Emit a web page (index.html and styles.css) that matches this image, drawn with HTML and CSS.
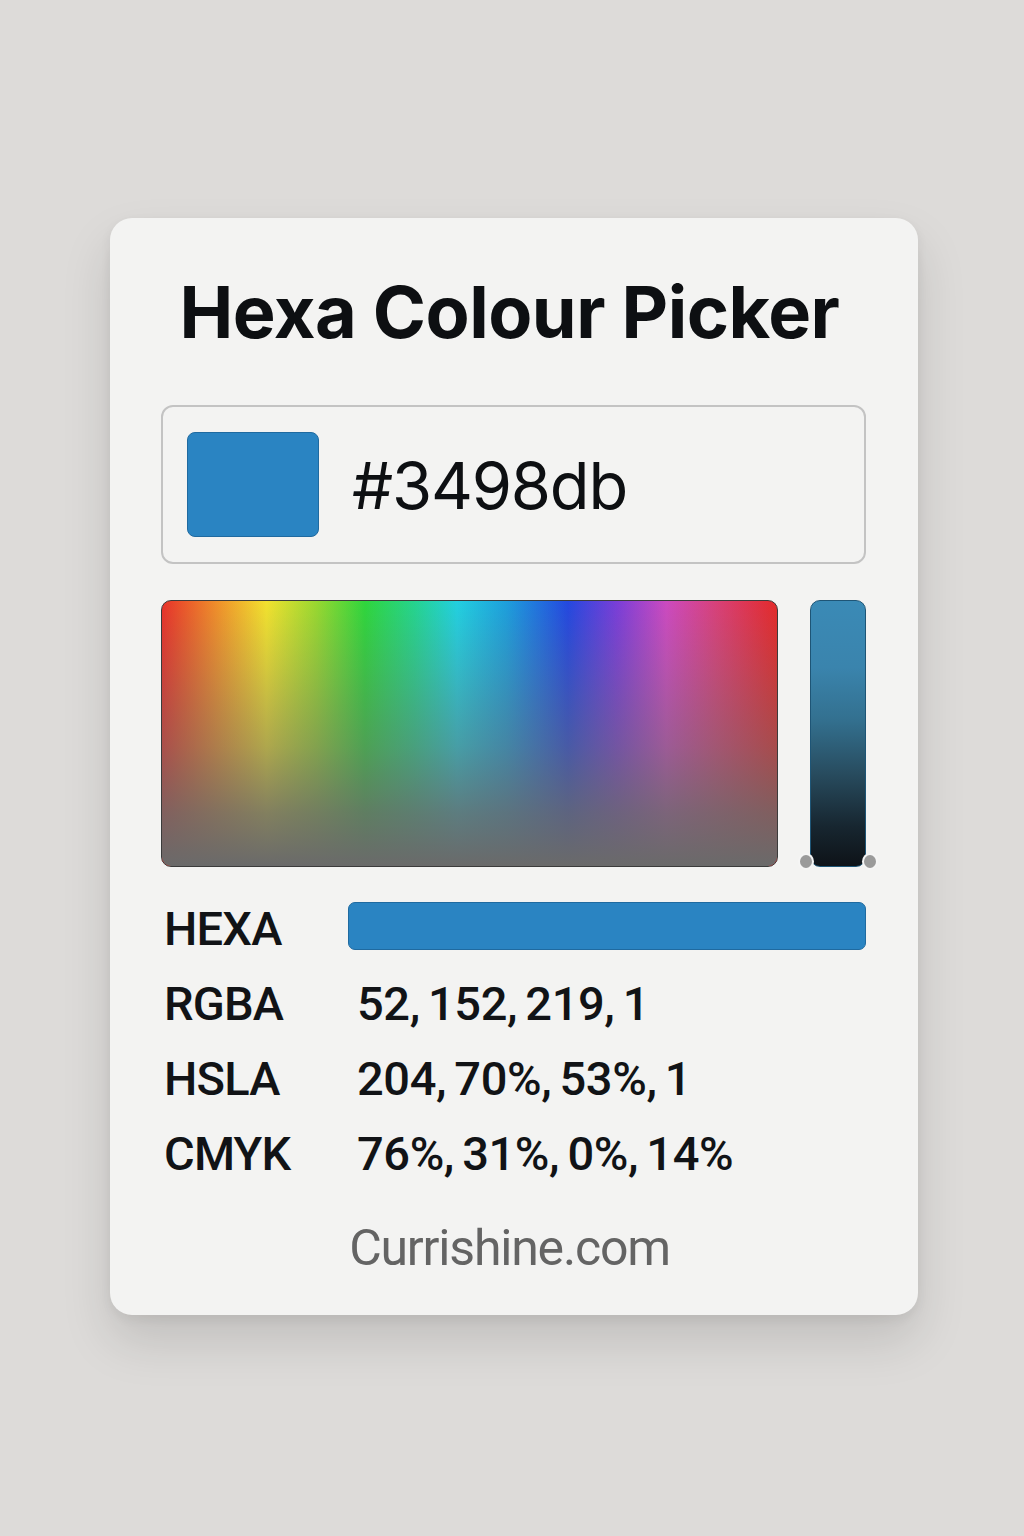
FILE: index.html
```html
<!DOCTYPE html>
<html lang="en">
<head>
<meta charset="utf-8">
<title>Hexa Colour Picker</title>
<link rel="stylesheet" href="styles.css">
</head>
<body>
<main class="card">
  <h1 class="title">Hexa Colour Picker</h1>
  <div class="hex-input">
    <span class="swatch"></span>
    <span class="hex-text">#3498db</span>
  </div>
  <div class="picker">
    <div class="spectrum"><div class="shade"></div></div>
    <div class="slider">
      <span class="knob knob-left"></span>
      <span class="knob knob-right"></span>
    </div>
  </div>
  <div class="values">
    <div class="label">HEXA</div>
    <div class="hexa-bar"></div>
    <div class="label">RGBA</div>
    <div class="value">52, 152, 219, 1</div>
    <div class="label">HSLA</div>
    <div class="value">204, 70%, 53%, 1</div>
    <div class="label">CMYK</div>
    <div class="value">76%, 31%, 0%, 14%</div>
  </div>
  <div class="footer">Currishine.com</div>
</main>
</body>
</html>
```
FILE: styles.css
```css
* { box-sizing: border-box; }
html, body { margin: 0; padding: 0; }
body {
  background: #dddbd9;
  font-family: Inter, "Liberation Sans", sans-serif;
  color: #0d0f12;
  min-height: 1536px;
}
.card {
  width: 808px;
  height: 1097px;
  margin: 218px auto 0 110px;
  background: #f3f3f2;
  border-radius: 22px;
  box-shadow: 0 26px 50px rgba(0,0,0,0.13), 0 4px 12px rgba(0,0,0,0.06);
  padding: 0 52px 0 51px;
  display: flex;
  flex-direction: column;
}
.title {
  margin: 44px 0 0;
  padding-right: 8px;
  text-align: center;
  font-size: 72px;
  font-weight: 700;
  letter-spacing: -0.5px;
  line-height: 100px;
}
.hex-input {
  margin-top: 43px;
  height: 159px;
  border: 2px solid #c3c3c3;
  border-radius: 12px;
  display: flex;
  align-items: center;
  padding-left: 24px;
  gap: 33px;
}
.swatch {
  width: 132px;
  height: 105px;
  background: #2a84c2;
  border: 1px solid #1f6aa0;
  border-radius: 8px;
}
.hex-text {
  font-size: 65px;
  font-weight: 400;
  letter-spacing: -1.2px;
  line-height: 1;
  padding-top: 2px;
}
.picker {
  margin-top: 36px;
  display: flex;
  gap: 32px;
  height: 267px;
}
.spectrum {
  position: relative;
  flex: 0 0 617px;
  border-radius: 10px;
  border: 1px solid #3b3b3b;
  overflow: hidden;
  background: linear-gradient(to right,
    #e8322a 0%, #f0902a 9%, #f2e22e 17%, #9ad830 25%, #2fd63c 33%,
    #25d48e 41%, #22d0e0 48%, #1d9fdc 56%, #2448e0 66%,
    #7a3ed8 74%, #cc4ac0 82%, #d8417a 90%, #e42a2a 100%);
}
.shade {
  position: absolute;
  inset: 0;
  background: linear-gradient(to bottom,
    rgba(110,110,110,0) 0%,
    rgba(110,110,110,0.22) 25%,
    rgba(108,108,108,0.5) 55%,
    rgba(106,106,106,0.82) 80%,
    rgba(106,106,106,1) 100%);
}
.slider {
  position: relative;
  flex: 0 0 56px;
  border-radius: 10px;
  border: 1px solid #1e5576;
  background: linear-gradient(to bottom,
    #3a8ab6 0%, #3a84ad 25%, #33708f 45%, #284c5f 65%, #172630 85%, #0e1318 100%);
}
.knob {
  position: absolute;
  bottom: -2px;
  width: 12px;
  height: 13px;
  border-radius: 50%;
  background: #9a9a9a;
  box-shadow: 0 0 0 2px #f5f5f5;
}
.knob-left { left: -11px; }
.knob-right { right: -11px; }
.values {
  margin-top: 35px;
  display: grid;
  grid-template-columns: 187px 1fr;
  grid-auto-rows: 48px;
  row-gap: 27px;
  align-items: center;
  font-family: Roboto, "Liberation Sans", sans-serif;
  color: #111316;
}
.label {
  font-size: 47px;
  font-weight: 500;
  letter-spacing: -0.8px;
  padding-left: 3px;
  line-height: 1;
  padding-top: 4px;
}
.value {
  font-size: 47px;
  font-weight: 500;
  letter-spacing: -0.4px;
  word-spacing: -3px;
  padding-left: 9px;
  line-height: 1;
  padding-top: 4px;
}
.hexa-bar {
  height: 48px;
  background: #2a84c2;
  border: 1px solid #1f6aa0;
  border-radius: 7px;
}
.footer {
  margin-top: 48px;
  padding-right: 8px;
  text-align: center;
  font-family: Roboto, "Liberation Sans", sans-serif;
  font-size: 50px;
  color: #646464;
  letter-spacing: -1.2px;
  line-height: 1;
}
```
